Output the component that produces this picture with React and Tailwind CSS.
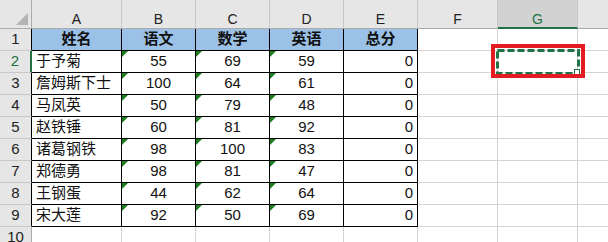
import React from 'react'

const font = { fontFamily: '"Liberation Sans", "Noto Sans CJK SC", sans-serif' }

const cols = [
  { key: 'A', w: 'w-[90px]' },
  { key: 'B', w: 'w-[74px]' },
  { key: 'C', w: 'w-[74px]' },
  { key: 'D', w: 'w-[74px]' },
  { key: 'E', w: 'w-[74px]' },
  { key: 'F', w: 'w-[80px]' },
  { key: 'G', w: 'w-[80px]' },
]

const data = [
  ['于予菊', 55, 69, 59, 0],
  ['詹姆斯下士', 100, 64, 61, 0],
  ['马凤英', 50, 79, 48, 0],
  ['赵铁锤', 60, 81, 92, 0],
  ['诸葛钢铁', 98, 100, 83, 0],
  ['郑德勇', 98, 81, 47, 0],
  ['王钢蛋', 44, 62, 64, 0],
  ['宋大莲', 92, 50, 69, 0],
]

const Tri = () => (
  <div className="absolute left-0 top-0 w-[6px] h-[6px] bg-[#1b7d1b] [clip-path:polygon(0_0,100%_0,0_100%)]" />
)

const Selection = () => (
  <>
    <div className="absolute left-[-7px] top-[-7px] w-[94px] h-[34px] border-4 border-[#e41b23] z-20 pointer-events-none" />
    <svg className="absolute left-[-2px] top-[-2px] z-10" width="84" height="26">
      <rect x="1.5" y="1.5" width="81" height="23" fill="none" stroke="#217346" strokeWidth="3" strokeDasharray="7 3" />
      <rect x="78.5" y="20.5" width="5" height="5" fill="#fff" stroke="#217346" strokeWidth="1" />
    </svg>
  </>
)

function RowHead({ n, border }) {
  return (
    <div className={`w-[32px] shrink-0 h-full flex items-center justify-center bg-[#e6e6e6] border-b border-b-[#c8c8c8] ${border} text-[15px] ${n === 2 ? 'text-[#217346]' : 'text-[#222]'}`}>
      {n}
    </div>
  )
}

export default function App() {
  return (
    <div className="w-[608px] h-[242px] overflow-hidden bg-white select-none" style={font}>
      {/* column header */}
      <div className="flex h-[29px]">
        <div className="relative w-[32px] shrink-0 bg-[#e6e6e6] border-r border-b border-[#ababab]">
          <svg className="absolute right-[3px] bottom-[3px]" width="12" height="12">
            <polygon points="12,0 12,12 0,12" fill="#b4b4b4" />
          </svg>
        </div>
        {cols.map(c => (
          <div
            key={c.key}
            className={`${c.w} shrink-0 flex items-center justify-center pt-[11px] text-[14px] border-r border-r-[#c8c8c8] ${
              c.key === 'G'
                ? 'bg-[#d2d2d2] text-[#217346] border-b-2 border-b-[#217346]'
                : 'bg-[#e6e6e6] text-[#222] border-b border-b-[#ababab]'
            }`}
          >
            {c.key}
          </div>
        ))}
        <div className="flex-1 bg-[#e6e6e6] border-b border-b-[#ababab]" />
      </div>

      {/* row 1 - headings */}
      <div className="flex h-[22px]">
        <RowHead n={1} border="border-r border-r-black" />
        {['姓名', '语文', '数学', '英语', '总分'].map((t, i) => (
          <div key={t} className={`${cols[i].w} shrink-0 flex items-center justify-center bg-[#9bc2e6] font-bold text-[15px] text-[#111] border-r border-b border-black`}>
            {t}
          </div>
        ))}
        <div className="w-[80px] shrink-0 border-r border-b border-[#d4d4d4]" />
        <div className="w-[80px] shrink-0 border-r border-b border-[#d4d4d4]" />
        <div className="flex-1 border-b border-[#d4d4d4]" />
      </div>

      {data.map((r, ri) => (
        <div key={ri} className="flex h-[22px]">
          <RowHead n={ri + 2} border={ri === 0 ? 'border-r-2 border-r-[#217346]' : 'border-r border-r-black'} />
          <div className="w-[90px] shrink-0 flex items-center pl-[4px] text-[15px] text-[#111] border-r border-b border-black">
            {r[0]}
          </div>
          {[1, 2, 3].map(j => (
            <div key={j} className="relative w-[74px] shrink-0 flex items-center justify-center text-[15px] text-[#111] border-r border-b border-black">
              <Tri />
              {r[j]}
            </div>
          ))}
          <div className="w-[74px] shrink-0 flex items-center justify-end pr-[4px] text-[15px] text-[#111] border-r border-b border-black">
            {r[4]}
          </div>
          <div className="w-[80px] shrink-0 border-r border-b border-[#d4d4d4]" />
          <div className="relative w-[80px] shrink-0 border-r border-b border-[#d4d4d4]">
            {ri === 0 && <Selection />}
          </div>
          <div className="flex-1 border-b border-[#d4d4d4]" />
        </div>
      ))}

      {/* row 10 */}
      <div className="flex h-[22px]">
        <RowHead n={10} border="border-r border-r-[#ababab]" />
        {cols.map(c => (
          <div key={c.key} className={`${c.w} shrink-0 border-r border-b border-[#d4d4d4]`} />
        ))}
        <div className="flex-1 border-b border-[#d4d4d4]" />
      </div>
    </div>
  )
}
